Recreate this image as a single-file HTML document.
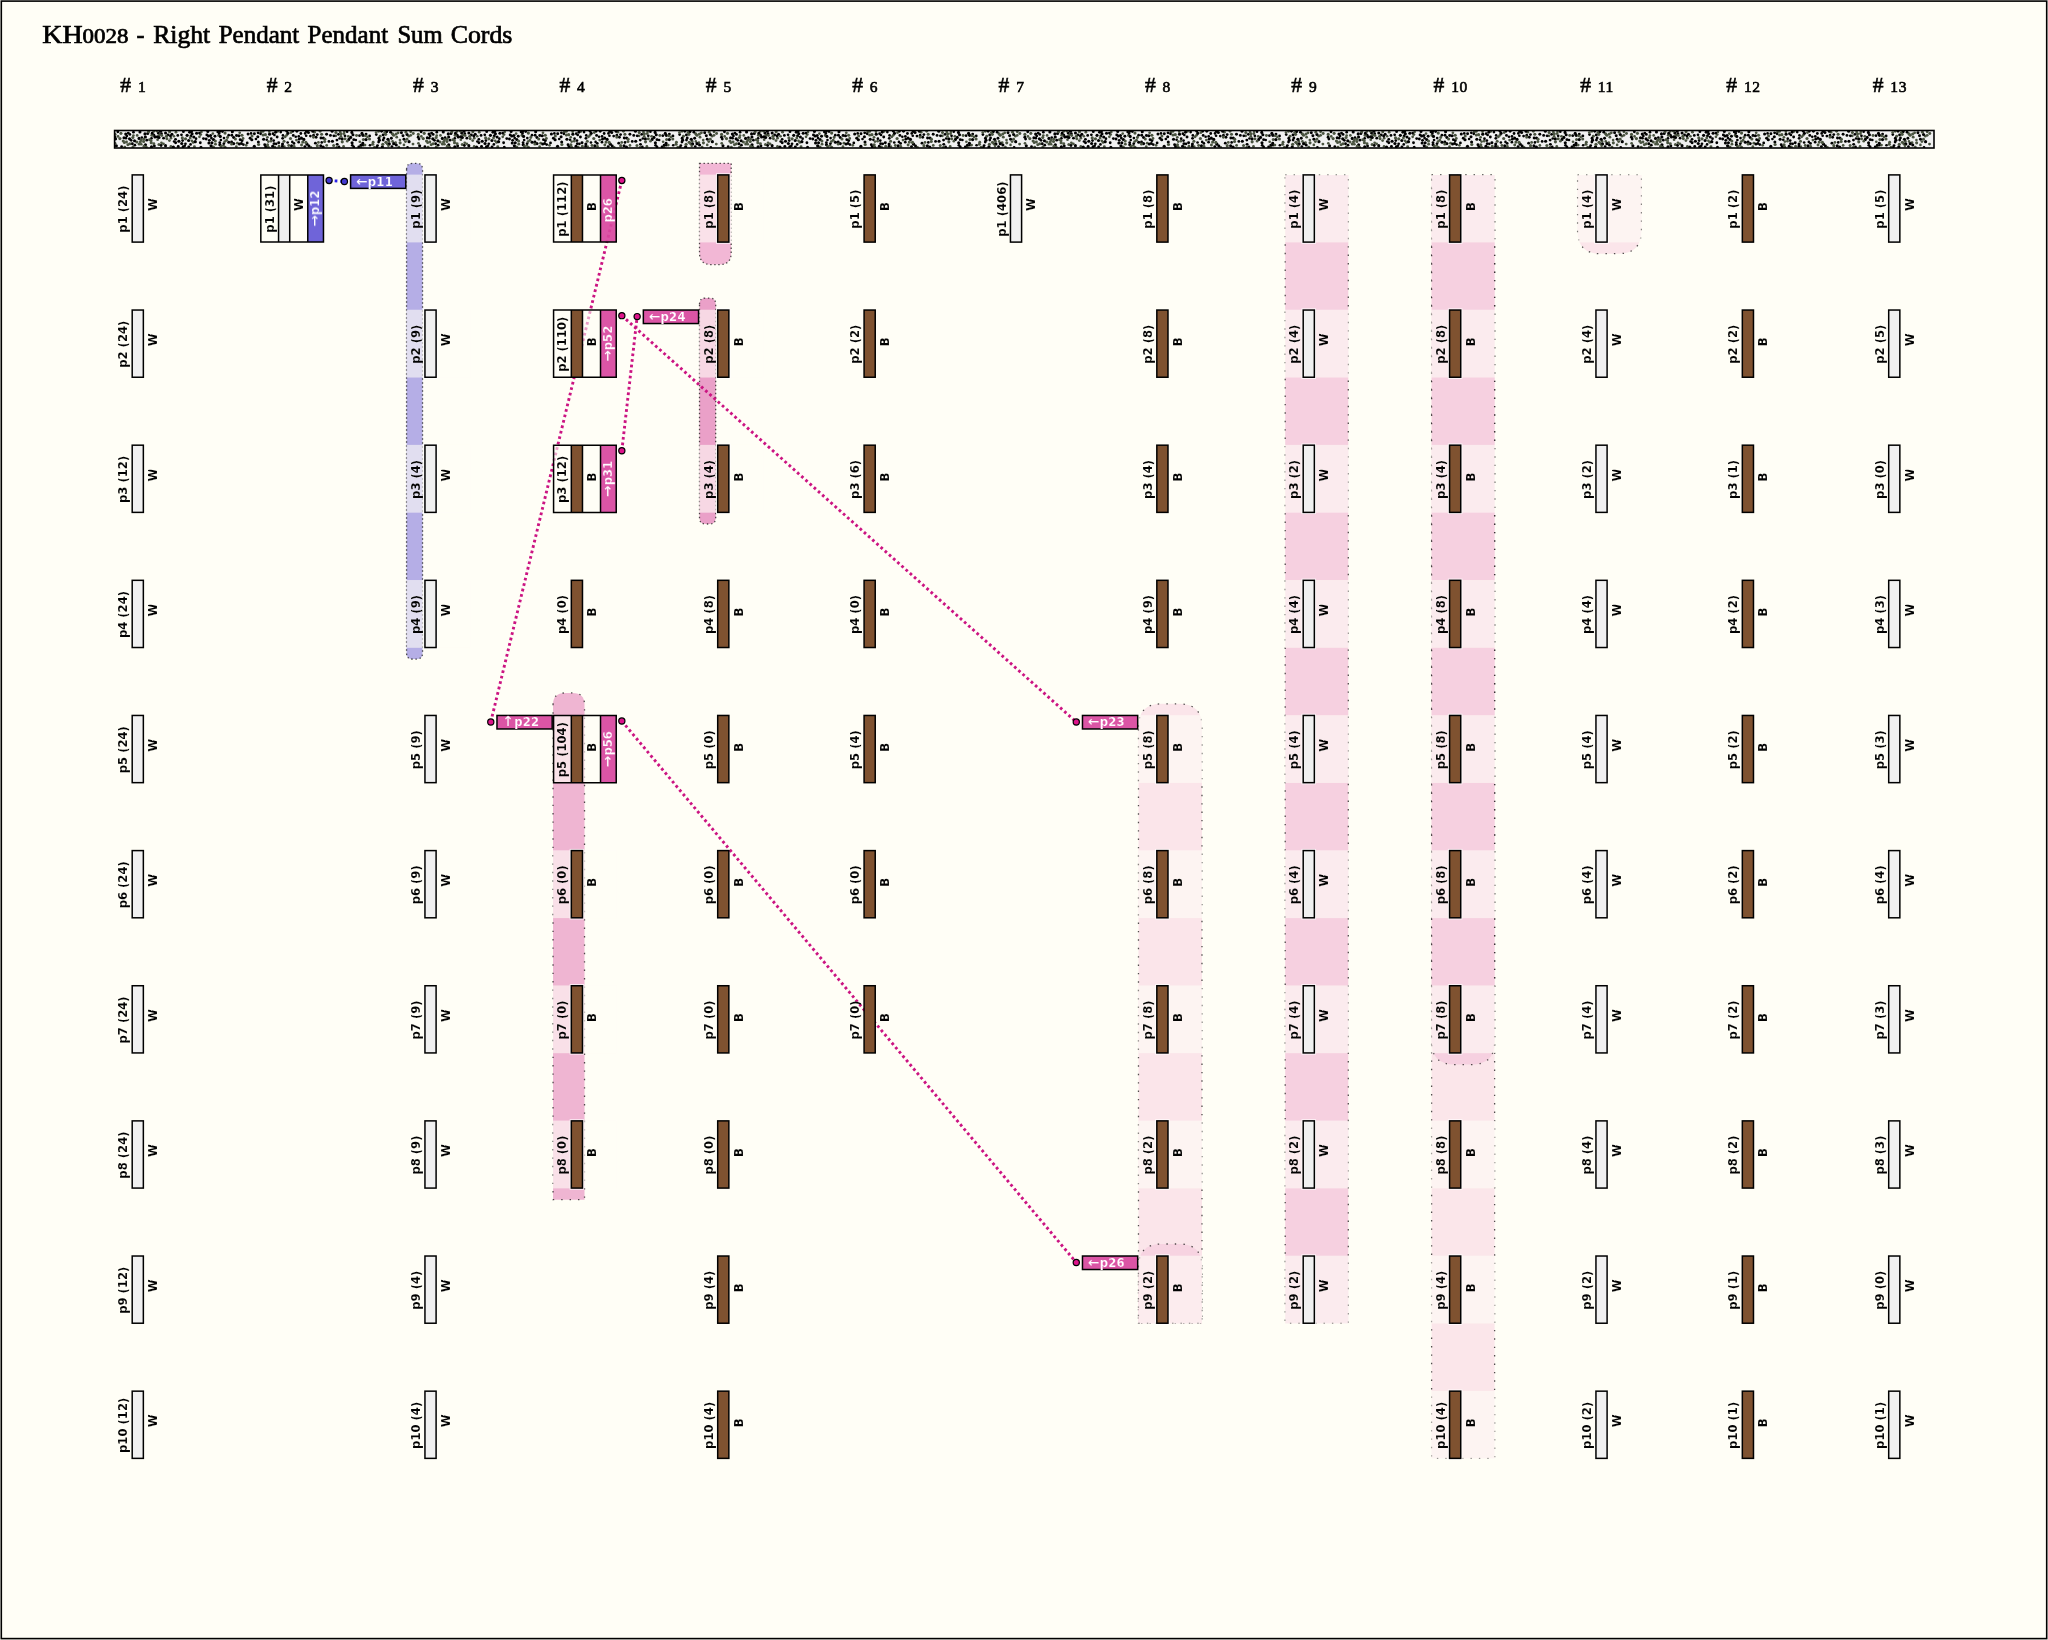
<!DOCTYPE html>
<html lang="en"><head><meta charset="utf-8"><title>KH0028 - Right Pendant Pendant Sum Cords</title>
<style>html,body{margin:0;padding:0;background:#FFFEF6;overflow:hidden;}svg{display:block;will-change:transform;}</style></head>
<body>
<svg width="2048" height="1640" viewBox="0 0 2048 1640">
<defs>
<g id="spk"><circle cx="98.22" cy="3.06" r="1.32" fill="#4A5440"/><circle cx="162.53" cy="6.56" r="1.45" fill="#000"/><circle cx="11.37" cy="7.67" r="1.33" fill="#000"/><circle cx="128.76" cy="14.08" r="1.37" fill="#000"/><circle cx="190.3" cy="16.05" r="1.42" fill="#000"/><circle cx="296.1" cy="1.36" r="1.39" fill="#4A5440"/><circle cx="43.75" cy="2.52" r="1.54" fill="#000"/><circle cx="54.81" cy="10.08" r="1.41" fill="#4A5440"/><circle cx="166.13" cy="1.62" r="1.36" fill="#000"/><circle cx="206.37" cy="7.57" r="1.48" fill="#000"/><circle cx="137.45" cy="5.49" r="1.51" fill="#4A5440"/><circle cx="74.03" cy="9.96" r="1.56" fill="#000"/><circle cx="221.24" cy="5.29" r="1.34" fill="#4A5440"/><circle cx="126.82" cy="12.94" r="1.45" fill="#000"/><circle cx="11.89" cy="11.49" r="1.47" fill="#4A5440"/><circle cx="265.53" cy="5.71" r="1.48" fill="#4A5440"/><circle cx="175.88" cy="8.04" r="1.58" fill="#4A5440"/><circle cx="143.79" cy="11.43" r="1.51" fill="#000"/><circle cx="196.27" cy="16.79" r="1.39" fill="#4A5440"/><circle cx="117.01" cy="11.5" r="1.44" fill="#000"/><circle cx="50.97" cy="2.51" r="1.53" fill="#000"/><circle cx="39.23" cy="4.64" r="1.56" fill="#000"/><circle cx="24.44" cy="7.92" r="1.57" fill="#000"/><circle cx="248.49" cy="14.68" r="1.42" fill="#000"/><circle cx="108.82" cy="15.01" r="1.35" fill="#4A5440"/><circle cx="53.45" cy="4.38" r="1.45" fill="#000"/><circle cx="178.68" cy="4.88" r="1.43" fill="#000"/><circle cx="111.99" cy="9.83" r="1.51" fill="#4A5440"/><circle cx="156.35" cy="10.67" r="1.32" fill="#4A5440"/><circle cx="272.83" cy="13.31" r="1.54" fill="#4A5440"/><circle cx="119.01" cy="7.1" r="1.49" fill="#000"/><circle cx="18.88" cy="1.7" r="1.35" fill="#000"/><circle cx="103.14" cy="1.46" r="1.35" fill="#000"/><circle cx="30.77" cy="6.53" r="1.56" fill="#000"/><circle cx="186.25" cy="3.02" r="1.4" fill="#000"/><circle cx="110.45" cy="2.6" r="1.6" fill="#4A5440"/><circle cx="141.33" cy="8.49" r="1.33" fill="#000"/><circle cx="103.92" cy="4.92" r="1.35" fill="#4A5440"/><circle cx="7" cy="16.1" r="1.34" fill="#000"/><circle cx="160.18" cy="16.55" r="1.51" fill="#4A5440"/><circle cx="79.2" cy="6.58" r="1.53" fill="#000"/><circle cx="161.54" cy="13.3" r="1.37" fill="#000"/><circle cx="246.13" cy="16.65" r="1.54" fill="#4A5440"/><circle cx="248.2" cy="12.66" r="1.46" fill="#000"/><circle cx="107.84" cy="1.07" r="1.38" fill="#000"/><circle cx="78.61" cy="11.89" r="1.43" fill="#4A5440"/><circle cx="284.2" cy="16.71" r="1.41" fill="#4A5440"/><circle cx="66.87" cy="4.3" r="1.36" fill="#000"/><circle cx="254.9" cy="8.42" r="1.54" fill="#4A5440"/><circle cx="25.71" cy="11.37" r="1.53" fill="#4A5440"/><circle cx="227.52" cy="8.39" r="1.54" fill="#000"/><circle cx="100.85" cy="13.65" r="1.42" fill="#4A5440"/><circle cx="121.74" cy="16.03" r="1.35" fill="#4A5440"/><circle cx="44.33" cy="14.07" r="1.5" fill="#4A5440"/><circle cx="106.28" cy="9.54" r="1.3" fill="#000"/><circle cx="294.47" cy="11.19" r="1.58" fill="#000"/><circle cx="131.57" cy="14.81" r="1.36" fill="#4A5440"/><circle cx="76.38" cy="5.38" r="1.48" fill="#000"/><circle cx="39.75" cy="15.43" r="1.44" fill="#000"/><circle cx="176.93" cy="15.34" r="1.58" fill="#000"/><circle cx="152.15" cy="9.27" r="1.31" fill="#000"/><circle cx="133.49" cy="3.58" r="1.54" fill="#000"/><circle cx="52.27" cy="8.32" r="1.47" fill="#4A5440"/><circle cx="98.87" cy="9.05" r="1.54" fill="#000"/><circle cx="32.18" cy="9.73" r="1.38" fill="#000"/><circle cx="234.23" cy="8.88" r="1.53" fill="#000"/><circle cx="276.76" cy="7.82" r="1.45" fill="#000"/><circle cx="137.2" cy="9.29" r="1.58" fill="#000"/><circle cx="212.07" cy="14.89" r="1.38" fill="#4A5440"/><circle cx="169.7" cy="15.98" r="1.34" fill="#4A5440"/><circle cx="36.89" cy="7.81" r="1.37" fill="#000"/><circle cx="22.18" cy="11.51" r="1.57" fill="#4A5440"/><circle cx="46.84" cy="12.27" r="1.34" fill="#4A5440"/><circle cx="267.76" cy="16.37" r="1.59" fill="#000"/><circle cx="120.79" cy="8.54" r="1.55" fill="#4A5440"/><circle cx="48.97" cy="7.63" r="1.4" fill="#000"/><circle cx="59.37" cy="5.79" r="1.31" fill="#4A5440"/><circle cx="168.04" cy="7.78" r="1.4" fill="#000"/><circle cx="189.24" cy="8.95" r="1.6" fill="#000"/><circle cx="239.11" cy="16.44" r="1.38" fill="#000"/><circle cx="82.03" cy="2.71" r="1.57" fill="#000"/><circle cx="248.4" cy="4.82" r="1.58" fill="#000"/><circle cx="173.06" cy="12.02" r="1.32" fill="#000"/><circle cx="208.73" cy="7.53" r="1.58" fill="#000"/><circle cx="192.43" cy="13.67" r="1.56" fill="#000"/><circle cx="20.21" cy="14.66" r="1.4" fill="#000"/><circle cx="167.74" cy="15.7" r="1.34" fill="#000"/><circle cx="159.81" cy="4.49" r="1.35" fill="#000"/><circle cx="15.28" cy="3.89" r="1.39" fill="#000"/><circle cx="230.36" cy="5.33" r="1.35" fill="#000"/><circle cx="105.25" cy="0.9" r="1.3" fill="#000"/><circle cx="222.34" cy="9.58" r="1.44" fill="#000"/><circle cx="283.48" cy="2.33" r="1.43" fill="#4A5440"/><circle cx="150.13" cy="14.2" r="1.45" fill="#000"/><circle cx="208.59" cy="16.61" r="1.55" fill="#000"/><circle cx="214.35" cy="10.97" r="1.4" fill="#000"/><circle cx="77.52" cy="3.26" r="1.55" fill="#000"/><circle cx="264.03" cy="11.53" r="1.37" fill="#000"/><circle cx="88.88" cy="8.09" r="1.43" fill="#000"/><circle cx="79.84" cy="16.28" r="1.46" fill="#4A5440"/><circle cx="74.14" cy="16.34" r="1.41" fill="#000"/><circle cx="0.32" cy="6.82" r="1.45" fill="#000"/><circle cx="60.96" cy="8.83" r="1.38" fill="#000"/><circle cx="27.22" cy="7.11" r="1.31" fill="#000"/><circle cx="92.28" cy="4.39" r="1.46" fill="#000"/><circle cx="227.64" cy="11.32" r="1.56" fill="#4A5440"/><circle cx="298.67" cy="3.04" r="1.49" fill="#4A5440"/><circle cx="13.28" cy="14.22" r="1.49" fill="#4A5440"/><circle cx="222.58" cy="13.84" r="1.46" fill="#000"/><circle cx="152.98" cy="14.21" r="1.55" fill="#4A5440"/><circle cx="207.12" cy="11.9" r="1.31" fill="#000"/><circle cx="40.37" cy="6.48" r="1.55" fill="#000"/><circle cx="169.4" cy="10.83" r="1.5" fill="#4A5440"/><circle cx="148.4" cy="0.65" r="1.52" fill="#4A5440"/><circle cx="199.97" cy="1.68" r="1.38" fill="#4A5440"/><circle cx="22.58" cy="4.93" r="1.36" fill="#4A5440"/><circle cx="224.39" cy="16.5" r="1.41" fill="#000"/><circle cx="232.62" cy="10.66" r="1.32" fill="#4A5440"/><circle cx="44.71" cy="4.74" r="1.39" fill="#4A5440"/><circle cx="172.2" cy="0.8" r="1.38" fill="#000"/><circle cx="203.82" cy="11.88" r="1.39" fill="#4A5440"/><circle cx="156.67" cy="8.17" r="1.34" fill="#000"/><circle cx="271.05" cy="3.85" r="1.58" fill="#4A5440"/><circle cx="5.31" cy="8.08" r="1.59" fill="#4A5440"/><circle cx="63.64" cy="16.01" r="1.47" fill="#000"/><circle cx="42.99" cy="9.14" r="1.34" fill="#4A5440"/><circle cx="248.77" cy="8.89" r="1.51" fill="#4A5440"/><circle cx="70.18" cy="15.23" r="1.31" fill="#000"/><circle cx="1.09" cy="8.61" r="1.39" fill="#000"/><circle cx="42.68" cy="6.21" r="1.55" fill="#000"/><circle cx="0.53" cy="12.84" r="1.34" fill="#4A5440"/><circle cx="280.98" cy="12.22" r="1.39" fill="#4A5440"/><circle cx="112.89" cy="7" r="1.48" fill="#4A5440"/><circle cx="109.4" cy="7.58" r="1.31" fill="#000"/><circle cx="30.85" cy="14.21" r="1.58" fill="#000"/><circle cx="154.98" cy="3.69" r="1.59" fill="#000"/><circle cx="268.2" cy="13.83" r="1.57" fill="#4A5440"/><circle cx="285.31" cy="9.55" r="1.31" fill="#4A5440"/><circle cx="86.81" cy="1.4" r="1.34" fill="#4A5440"/><circle cx="143.21" cy="6.2" r="1.52" fill="#000"/><circle cx="296.11" cy="4.84" r="1.39" fill="#4A5440"/><circle cx="150.76" cy="4.19" r="1.6" fill="#4A5440"/><circle cx="136.47" cy="2.88" r="1.33" fill="#000"/><circle cx="72.53" cy="4.81" r="1.57" fill="#000"/><circle cx="125.53" cy="9.14" r="1.4" fill="#000"/><circle cx="18.82" cy="5.12" r="1.34" fill="#4A5440"/><circle cx="261.71" cy="4.12" r="1.37" fill="#000"/><circle cx="289.33" cy="14.43" r="1.31" fill="#4A5440"/><circle cx="9.78" cy="12.17" r="1.44" fill="#4A5440"/><circle cx="178.09" cy="0.6" r="1.58" fill="#000"/><circle cx="250.4" cy="14.54" r="1.37" fill="#4A5440"/><circle cx="33.07" cy="3.12" r="1.5" fill="#000"/><circle cx="285.55" cy="12.36" r="1.53" fill="#4A5440"/><circle cx="195.78" cy="5.55" r="1.38" fill="#000"/><circle cx="159.06" cy="10.1" r="1.37" fill="#000"/><circle cx="182.3" cy="0.77" r="1.44" fill="#000"/><circle cx="290.85" cy="11.11" r="1.44" fill="#4A5440"/><circle cx="93.23" cy="0.96" r="1.5" fill="#000"/><circle cx="127.39" cy="4.79" r="1.58" fill="#4A5440"/><circle cx="68.78" cy="1.16" r="1.43" fill="#000"/><circle cx="207.02" cy="3.83" r="1.52" fill="#4A5440"/><circle cx="294.16" cy="5.68" r="1.37" fill="#4A5440"/><circle cx="67.16" cy="13" r="1.59" fill="#000"/><circle cx="67.73" cy="7.4" r="1.58" fill="#4A5440"/><circle cx="44.4" cy="7.01" r="1.59" fill="#000"/><circle cx="18.24" cy="7.01" r="1.57" fill="#4A5440"/><circle cx="222.24" cy="16.86" r="1.4" fill="#4A5440"/><circle cx="56.27" cy="15.85" r="1.31" fill="#4A5440"/><circle cx="201.52" cy="6.77" r="1.4" fill="#000"/><circle cx="84.87" cy="6.33" r="1.34" fill="#4A5440"/><circle cx="292.46" cy="3.98" r="1.55" fill="#000"/><circle cx="14.94" cy="8.32" r="1.58" fill="#000"/><circle cx="272.06" cy="1.09" r="1.54" fill="#000"/><circle cx="232.53" cy="1.26" r="1.32" fill="#000"/><circle cx="279.06" cy="4.79" r="1.57" fill="#4A5440"/><circle cx="95.99" cy="5.09" r="1.53" fill="#000"/><circle cx="277.96" cy="10.93" r="1.31" fill="#4A5440"/><circle cx="70.93" cy="8.35" r="1.59" fill="#4A5440"/><circle cx="117.23" cy="4.69" r="1.45" fill="#000"/><circle cx="281.49" cy="3.58" r="1.52" fill="#4A5440"/><circle cx="184.18" cy="5.94" r="1.41" fill="#000"/><circle cx="237.26" cy="1.89" r="1.53" fill="#000"/><circle cx="75.01" cy="1.66" r="1.47" fill="#000"/><circle cx="98.8" cy="16.58" r="1.6" fill="#4A5440"/><circle cx="29.24" cy="8.73" r="1.43" fill="#4A5440"/><circle cx="188.14" cy="11.59" r="1.55" fill="#4A5440"/><circle cx="255.04" cy="5.39" r="1.41" fill="#000"/><circle cx="223.86" cy="3.85" r="1.37" fill="#000"/><circle cx="46.5" cy="15.01" r="1.4" fill="#000"/><circle cx="245.2" cy="11.25" r="1.33" fill="#4A5440"/><circle cx="144" cy="13.95" r="1.57" fill="#4A5440"/><circle cx="12.24" cy="5.39" r="1.36" fill="#000"/><circle cx="282.12" cy="6.67" r="1.43" fill="#4A5440"/><circle cx="286.83" cy="2.32" r="1.49" fill="#000"/><circle cx="77.32" cy="10.37" r="1.36" fill="#4A5440"/><circle cx="3.45" cy="5.93" r="1.36" fill="#4A5440"/><circle cx="241.21" cy="9.53" r="1.33" fill="#000"/><circle cx="193.86" cy="2.09" r="1.51" fill="#000"/><circle cx="124.29" cy="5.22" r="1.59" fill="#000"/><circle cx="94.74" cy="9.83" r="1.42" fill="#000"/><circle cx="262.13" cy="16.84" r="1.36" fill="#000"/><circle cx="1.78" cy="15.3" r="1.55" fill="#000"/><circle cx="139.79" cy="3.25" r="1.47" fill="#000"/><circle cx="194.31" cy="15.43" r="1.49" fill="#000"/><circle cx="158.07" cy="15.69" r="1.45" fill="#000"/><circle cx="244.1" cy="16.36" r="1.34" fill="#000"/><circle cx="146.41" cy="1.47" r="1.42" fill="#4A5440"/><circle cx="274.25" cy="10.71" r="1.35" fill="#4A5440"/><circle cx="238.34" cy="4.22" r="1.55" fill="#000"/><circle cx="251.49" cy="3.58" r="1.42" fill="#000"/><circle cx="37.32" cy="4.63" r="1.57" fill="#4A5440"/><circle cx="229.74" cy="1.22" r="1.34" fill="#4A5440"/><circle cx="181.83" cy="9.57" r="1.39" fill="#4A5440"/><circle cx="127.41" cy="10.1" r="1.5" fill="#000"/><circle cx="135.51" cy="7.75" r="1.49" fill="#000"/><circle cx="148.47" cy="4.43" r="1.53" fill="#4A5440"/><circle cx="143.53" cy="2.35" r="1.43" fill="#000"/><circle cx="154.73" cy="1.26" r="1.32" fill="#4A5440"/><circle cx="152.84" cy="6.76" r="1.34" fill="#4A5440"/><circle cx="259.95" cy="16.84" r="1.54" fill="#4A5440"/><circle cx="58.75" cy="16.6" r="1.59" fill="#000"/><circle cx="277.84" cy="3.29" r="1.58" fill="#4A5440"/><circle cx="229.35" cy="3.19" r="1.38" fill="#4A5440"/><circle cx="247.38" cy="2.94" r="1.58" fill="#000"/><circle cx="63.18" cy="4.88" r="1.4" fill="#000"/><circle cx="11.17" cy="3.57" r="1.58" fill="#000"/><circle cx="206.15" cy="15.2" r="1.54" fill="#000"/><circle cx="34.9" cy="9.25" r="1.41" fill="#4A5440"/><circle cx="264.77" cy="9.65" r="1.56" fill="#000"/><circle cx="31.73" cy="16.79" r="1.42" fill="#4A5440"/><circle cx="241.93" cy="4.92" r="1.47" fill="#4A5440"/><circle cx="109.26" cy="13.06" r="1.35" fill="#000"/><circle cx="225.53" cy="1.39" r="1.38" fill="#4A5440"/><circle cx="177.69" cy="11.42" r="1.3" fill="#000"/><circle cx="186.85" cy="7.65" r="1.57" fill="#000"/><circle cx="198.09" cy="0.96" r="1.41" fill="#000"/><circle cx="68.02" cy="10.11" r="1.36" fill="#000"/><circle cx="29.06" cy="11" r="1.53" fill="#4A5440"/><circle cx="121.91" cy="4.91" r="1.49" fill="#000"/><circle cx="170.56" cy="6.31" r="1.43" fill="#4A5440"/><circle cx="17.71" cy="13.3" r="1.47" fill="#000"/><circle cx="153.76" cy="11.06" r="1.35" fill="#4A5440"/><circle cx="93.84" cy="5.49" r="1.57" fill="#000"/><circle cx="237.48" cy="12.26" r="1.55" fill="#000"/><circle cx="224.97" cy="7.98" r="1.33" fill="#000"/><circle cx="215.85" cy="4.94" r="1.43" fill="#000"/><circle cx="239.14" cy="9.13" r="1.49" fill="#000"/><circle cx="266.92" cy="0.85" r="1.37" fill="#000"/><circle cx="226.31" cy="5.93" r="1.4" fill="#4A5440"/><circle cx="191.29" cy="11.89" r="1.59" fill="#4A5440"/><circle cx="132.61" cy="12.41" r="1.39" fill="#000"/><circle cx="64.29" cy="10.75" r="1.57" fill="#000"/><circle cx="104.6" cy="2.91" r="1.31" fill="#000"/><circle cx="210.07" cy="10.93" r="1.52" fill="#4A5440"/><circle cx="19.95" cy="10.22" r="1.55" fill="#000"/><circle cx="277.34" cy="15.99" r="1.36" fill="#000"/><circle cx="33.96" cy="1.16" r="1.54" fill="#4A5440"/><circle cx="191.55" cy="5.28" r="1.33" fill="#000"/><circle cx="96.79" cy="7.51" r="1.38" fill="#000"/><circle cx="85.71" cy="12.27" r="1.4" fill="#000"/><circle cx="292.38" cy="8.81" r="1.49" fill="#4A5440"/><circle cx="9.4" cy="7.33" r="1.53" fill="#000"/><circle cx="105.18" cy="12.09" r="1.36" fill="#000"/><circle cx="261.52" cy="2.08" r="1.35" fill="#4A5440"/><circle cx="0.39" cy="3.89" r="1.59" fill="#4A5440"/><circle cx="105.3" cy="14.16" r="1.58" fill="#000"/><circle cx="86.06" cy="4.1" r="1.45" fill="#4A5440"/><circle cx="24.53" cy="13.44" r="1.54" fill="#4A5440"/><circle cx="270.06" cy="2" r="1.31" fill="#4A5440"/><circle cx="273.34" cy="8.77" r="1.57" fill="#000"/><circle cx="105.7" cy="5.92" r="1.55" fill="#000"/><circle cx="200.81" cy="12.69" r="1.43" fill="#000"/><circle cx="268.46" cy="4.48" r="1.39" fill="#000"/><circle cx="46.89" cy="3.14" r="1.4" fill="#000"/><circle cx="158.38" cy="3.22" r="1.36" fill="#000"/><circle cx="298.4" cy="13.56" r="1.43" fill="#4A5440"/><circle cx="59.5" cy="11" r="1.36" fill="#000"/><circle cx="117.78" cy="1.15" r="1.54" fill="#000"/><circle cx="210.32" cy="8.76" r="1.44" fill="#4A5440"/><circle cx="122.75" cy="12.68" r="1.43" fill="#4A5440"/><circle cx="219.05" cy="14.95" r="1.51" fill="#4A5440"/><circle cx="258.55" cy="11.68" r="1.44" fill="#4A5440"/><circle cx="128.47" cy="8.02" r="1.42" fill="#4A5440"/><circle cx="236.02" cy="6.94" r="1.59" fill="#000"/><circle cx="48.78" cy="13.34" r="1.46" fill="#4A5440"/><circle cx="164.1" cy="12.29" r="1.49" fill="#000"/><circle cx="251.43" cy="9.1" r="1.58" fill="#000"/><circle cx="119.04" cy="13.03" r="1.6" fill="#000"/><circle cx="39.22" cy="13.26" r="1.49" fill="#4A5440"/><circle cx="68.54" cy="16.31" r="1.49" fill="#000"/><circle cx="252.87" cy="6.38" r="1.38" fill="#4A5440"/><circle cx="114.09" cy="4.73" r="1.36" fill="#000"/><circle cx="91.54" cy="8.42" r="1.49" fill="#000"/><circle cx="281.68" cy="14.53" r="1.55" fill="#000"/><circle cx="274.73" cy="13.38" r="1.55" fill="#000"/><circle cx="192.04" cy="0.84" r="1.59" fill="#000"/><circle cx="198.95" cy="4.68" r="1.34" fill="#000"/><circle cx="70.86" cy="13.25" r="1.35" fill="#000"/><circle cx="50.93" cy="15.13" r="1.53" fill="#000"/><circle cx="202.74" cy="15.17" r="1.55" fill="#4A5440"/><circle cx="168.35" cy="4.91" r="1.34" fill="#000"/><circle cx="149.03" cy="8.72" r="1.56" fill="#000"/><circle cx="291.35" cy="1.83" r="1.49" fill="#4A5440"/><circle cx="8.65" cy="10.54" r="1.58" fill="#4A5440"/><circle cx="217.83" cy="10.79" r="1.56" fill="#000"/><circle cx="159.4" cy="13.16" r="1.43" fill="#000"/><circle cx="250.75" cy="5.37" r="1.42" fill="#4A5440"/><circle cx="153.6" cy="16.49" r="1.54" fill="#4A5440"/><circle cx="100.36" cy="5.77" r="1.48" fill="#000"/><circle cx="268.6" cy="9.49" r="1.39" fill="#000"/><circle cx="54.99" cy="1.2" r="1.57" fill="#4A5440"/><circle cx="198.88" cy="6.61" r="1.54" fill="#4A5440"/><circle cx="16.57" cy="9.85" r="1.34" fill="#000"/><circle cx="179.54" cy="15.88" r="1.44" fill="#4A5440"/><circle cx="125.09" cy="2.26" r="1.36" fill="#4A5440"/><circle cx="46.03" cy="0.85" r="1.51" fill="#000"/><circle cx="36.9" cy="16.35" r="1.56" fill="#000"/><circle cx="39.12" cy="0.89" r="1.37" fill="#4A5440"/><circle cx="15.21" cy="13.22" r="1.56" fill="#4A5440"/><circle cx="221.32" cy="1.97" r="1.51" fill="#4A5440"/><circle cx="139.69" cy="15.8" r="1.59" fill="#000"/><circle cx="217.53" cy="0.79" r="1.5" fill="#000"/><circle cx="94.35" cy="12.49" r="1.56" fill="#000"/><circle cx="110.18" cy="11.11" r="1.43" fill="#4A5440"/><circle cx="116.99" cy="13.42" r="1.54" fill="#4A5440"/><circle cx="18.39" cy="16.48" r="1.55" fill="#4A5440"/><circle cx="100.71" cy="10.47" r="1.55" fill="#4A5440"/><circle cx="114.25" cy="11.76" r="1.57" fill="#000"/><circle cx="244.91" cy="5.22" r="1.38" fill="#000"/><circle cx="246.2" cy="14.74" r="1.38" fill="#000"/><circle cx="258.16" cy="13.75" r="1.57" fill="#4A5440"/><circle cx="167.93" cy="13.6" r="1.53" fill="#000"/><circle cx="184.07" cy="11.65" r="1.36" fill="#000"/><circle cx="26.6" cy="13.75" r="1.37" fill="#4A5440"/><circle cx="57.37" cy="3.73" r="1.51" fill="#000"/><circle cx="181.13" cy="6.22" r="1.31" fill="#000"/><circle cx="10.18" cy="16.74" r="1.45" fill="#4A5440"/><circle cx="172.03" cy="4.86" r="1.43" fill="#4A5440"/><circle cx="77.04" cy="1.22" r="1.35" fill="#000"/><circle cx="25.37" cy="1.43" r="1.56" fill="#000"/><circle cx="275.98" cy="1.65" r="1.42" fill="#000"/><circle cx="292.92" cy="16.76" r="1.31" fill="#000"/><circle cx="273.81" cy="15.34" r="1.31" fill="#4A5440"/><circle cx="228.98" cy="15.91" r="1.39" fill="#4A5440"/><circle cx="179.39" cy="12.95" r="1.4" fill="#000"/><circle cx="145.98" cy="3.35" r="1.34" fill="#000"/><circle cx="205.53" cy="0.81" r="1.36" fill="#4A5440"/><circle cx="262.89" cy="15.09" r="1.43" fill="#000"/><circle cx="29.42" cy="15.74" r="1.49" fill="#4A5440"/><circle cx="190.53" cy="2.93" r="1.32" fill="#000"/><circle cx="47.22" cy="5.02" r="1.4" fill="#4A5440"/><circle cx="96.47" cy="15.32" r="1.59" fill="#000"/><circle cx="202.69" cy="4.04" r="1.39" fill="#000"/><circle cx="110.49" cy="16.75" r="1.58" fill="#4A5440"/><circle cx="42.51" cy="0.63" r="1.46" fill="#4A5440"/><circle cx="56.36" cy="7.69" r="1.37" fill="#4A5440"/><circle cx="173.29" cy="2.85" r="1.53" fill="#000"/><circle cx="184.57" cy="8.68" r="1.36" fill="#000"/><circle cx="61.35" cy="1.67" r="1.42" fill="#4A5440"/><circle cx="255.35" cy="14.69" r="1.3" fill="#000"/><circle cx="36.63" cy="12.25" r="1.56" fill="#4A5440"/><circle cx="97.35" cy="12.19" r="1.53" fill="#000"/><circle cx="289.36" cy="8.67" r="1.46" fill="#000"/><circle cx="162.97" cy="0.94" r="1.37" fill="#4A5440"/><circle cx="75.96" cy="13.92" r="1.33" fill="#000"/><circle cx="212" cy="3.78" r="1.48" fill="#000"/><circle cx="13.7" cy="2.61" r="1.45" fill="#000"/><circle cx="84.81" cy="2.59" r="1.34" fill="#000"/><circle cx="226.44" cy="3.28" r="1.58" fill="#4A5440"/><circle cx="75.61" cy="7.48" r="1.41" fill="#4A5440"/><circle cx="160.99" cy="1.73" r="1.45" fill="#000"/><circle cx="6.32" cy="2.87" r="1.53" fill="#4A5440"/><circle cx="164.47" cy="15.67" r="1.38" fill="#4A5440"/><circle cx="288.4" cy="5.29" r="1.49" fill="#000"/><circle cx="36.51" cy="10.29" r="1.45" fill="#4A5440"/><circle cx="81.41" cy="8.2" r="1.34" fill="#000"/><circle cx="37.58" cy="2.74" r="1.42" fill="#000"/><circle cx="26.64" cy="9.5" r="1.48" fill="#4A5440"/><circle cx="61.02" cy="12.18" r="1.46" fill="#000"/><circle cx="86.39" cy="16.7" r="1.53" fill="#000"/><circle cx="264.26" cy="7.77" r="1.42" fill="#000"/><circle cx="186.92" cy="14.45" r="1.46" fill="#4A5440"/><circle cx="230.42" cy="8.35" r="1.51" fill="#4A5440"/><circle cx="264.12" cy="0.67" r="1.48" fill="#4A5440"/><circle cx="151.01" cy="16.29" r="1.43" fill="#000"/><circle cx="237.69" cy="14.83" r="1.41" fill="#000"/><circle cx="219.3" cy="5.37" r="1.47" fill="#000"/><circle cx="55.87" cy="5.56" r="1.47" fill="#000"/><circle cx="176.39" cy="2.03" r="1.4" fill="#4A5440"/><circle cx="3.24" cy="1.37" r="1.45" fill="#000"/><circle cx="279.13" cy="13.21" r="1.6" fill="#000"/><circle cx="106.49" cy="16.05" r="1.46" fill="#4A5440"/><circle cx="174.11" cy="14.94" r="1.45" fill="#4A5440"/><circle cx="51.78" cy="5.78" r="1.55" fill="#4A5440"/><circle cx="271.31" cy="11.85" r="1.6" fill="#4A5440"/><circle cx="269.37" cy="7.46" r="1.39" fill="#000"/><circle cx="124.78" cy="13.44" r="1.51" fill="#000"/><circle cx="80.68" cy="11.14" r="1.6" fill="#000"/><circle cx="30.36" cy="3.38" r="1.55" fill="#000"/><circle cx="233.72" cy="5.86" r="1.41" fill="#4A5440"/></g>
<clipPath id="pc"><rect x="114.6" y="130.5" width="1819.4" height="17.5"/></clipPath>
</defs>
<rect width="2048" height="1640" fill="#FFFEF6"/>
<rect x="1.3" y="1.1" width="2045.4" height="1637.5" fill="none" stroke="#000" stroke-width="1.6"/>
<g font-family="'Liberation Serif', serif" fill="#000" opacity="0.999">
<g font-size="25.5" stroke="#000" stroke-width="0.7">
<text x="42.3" y="42.5" textLength="86.1" lengthAdjust="spacingAndGlyphs">KH<tspan font-size="21">0028</tspan></text>
<text x="136.4" y="42.5" textLength="8" lengthAdjust="spacingAndGlyphs">-</text>
<text x="153.2" y="42.5" textLength="57" lengthAdjust="spacingAndGlyphs">Right</text>
<text x="218.7" y="42.5" textLength="80.5" lengthAdjust="spacingAndGlyphs">Pendant</text>
<text x="307.6" y="42.5" textLength="80.5" lengthAdjust="spacingAndGlyphs">Pendant</text>
<text x="397.4" y="42.5" textLength="45.2" lengthAdjust="spacingAndGlyphs">Sum</text>
<text x="450.7" y="42.5" textLength="61.7" lengthAdjust="spacingAndGlyphs">Cords</text>
</g>
<text x="133.35" y="91.8" text-anchor="middle" font-size="21.5" stroke="#000" stroke-width="0.6"># <tspan font-size="15.5" dx="1.5" letter-spacing="0.6">1</tspan></text>
<text x="279.72" y="91.8" text-anchor="middle" font-size="21.5" stroke="#000" stroke-width="0.6"># <tspan font-size="15.5" dx="1.5" letter-spacing="0.6">2</tspan></text>
<text x="426.1" y="91.8" text-anchor="middle" font-size="21.5" stroke="#000" stroke-width="0.6"># <tspan font-size="15.5" dx="1.5" letter-spacing="0.6">3</tspan></text>
<text x="572.48" y="91.8" text-anchor="middle" font-size="21.5" stroke="#000" stroke-width="0.6"># <tspan font-size="15.5" dx="1.5" letter-spacing="0.6">4</tspan></text>
<text x="718.85" y="91.8" text-anchor="middle" font-size="21.5" stroke="#000" stroke-width="0.6"># <tspan font-size="15.5" dx="1.5" letter-spacing="0.6">5</tspan></text>
<text x="865.23" y="91.8" text-anchor="middle" font-size="21.5" stroke="#000" stroke-width="0.6"># <tspan font-size="15.5" dx="1.5" letter-spacing="0.6">6</tspan></text>
<text x="1011.6" y="91.8" text-anchor="middle" font-size="21.5" stroke="#000" stroke-width="0.6"># <tspan font-size="15.5" dx="1.5" letter-spacing="0.6">7</tspan></text>
<text x="1157.98" y="91.8" text-anchor="middle" font-size="21.5" stroke="#000" stroke-width="0.6"># <tspan font-size="15.5" dx="1.5" letter-spacing="0.6">8</tspan></text>
<text x="1304.35" y="91.8" text-anchor="middle" font-size="21.5" stroke="#000" stroke-width="0.6"># <tspan font-size="15.5" dx="1.5" letter-spacing="0.6">9</tspan></text>
<text x="1450.73" y="91.8" text-anchor="middle" font-size="21.5" stroke="#000" stroke-width="0.6"># <tspan font-size="15.5" dx="1.5" letter-spacing="0.6">10</tspan></text>
<text x="1597.1" y="91.8" text-anchor="middle" font-size="21.5" stroke="#000" stroke-width="0.6"># <tspan font-size="15.5" dx="1.5" letter-spacing="0.6">11</tspan></text>
<text x="1743.48" y="91.8" text-anchor="middle" font-size="21.5" stroke="#000" stroke-width="0.6"># <tspan font-size="15.5" dx="1.5" letter-spacing="0.6">12</tspan></text>
<text x="1889.85" y="91.8" text-anchor="middle" font-size="21.5" stroke="#000" stroke-width="0.6"># <tspan font-size="15.5" dx="1.5" letter-spacing="0.6">13</tspan></text>
</g>
<rect x="114.6" y="130.5" width="1819.4" height="17.5" fill="#F1F1F1"/>
<g clip-path="url(#pc)"><use href="#spk" x="114.6" y="130.5"/><use href="#spk" x="417.9" y="130.5"/><use href="#spk" x="721.2" y="130.5"/><use href="#spk" x="1024.5" y="130.5"/><use href="#spk" x="1327.8" y="130.5"/><use href="#spk" x="1631.1" y="130.5"/></g>
<rect x="114.6" y="130.5" width="1819.4" height="17.5" fill="none" stroke="#000" stroke-width="1.6"/>
<g stroke="#000" stroke-opacity="0.68" stroke-width="1.3" stroke-linecap="butt">
<path d="M406.55 169.5Q406.55 163.3 412.75 163.3H416.35Q422.55 163.3 422.55 169.5V652.92Q422.55 659.12 416.35 659.12H412.75Q406.55 659.12 406.55 652.92Z" fill="#B5AEE6" stroke-dasharray="1.4 2.6"/>
<path d="M553.03 704.76Q553.03 692.96 564.83 692.96H572.73Q584.53 692.96 584.53 704.76V1199.68H553.03Z" fill="#EFB5D2" stroke-dasharray="1.4 7"/>
<path d="M699.5 163.3H731.2V252.8Q731.2 264.6 719.4 264.6H711.3Q699.5 264.6 699.5 252.8Z" fill="#F2B7D5" stroke-dasharray="1.4 2.6"/>
<path d="M699.5 304.24Q699.5 298.04 705.7 298.04H709.5Q715.7 298.04 715.7 304.24V517.78Q715.7 523.98 709.5 523.98H705.7Q699.5 523.98 699.5 517.78Z" fill="#EAA0C8" stroke-dasharray="1.4 2.6"/>
<path d="M1138.48 726.86Q1138.48 703.86 1161.48 703.86H1178.98Q1201.98 703.86 1201.98 726.86V1323.22H1138.48Z" fill="#FBE5EA" stroke-dasharray="1.4 7"/>
<path d="M1138.48 1267.02Q1138.48 1244.02 1161.48 1244.02H1178.98Q1201.98 1244.02 1201.98 1267.02V1323.22H1138.48Z" fill="#F7D3E1" stroke-dasharray="1.4 7"/>
<path d="M1285.2 174.9H1348.3V1323.22H1285.2Z" fill="#F6D0E0" stroke-dasharray="1.4 7"/>
<path d="M1431.62 174.9H1494.62V1458.36H1431.62Z" fill="#FBE6EA" stroke-dasharray="1.4 7"/>
<path d="M1431.62 174.9H1494.62V1041.54Q1494.62 1064.54 1471.62 1064.54H1454.62Q1431.62 1064.54 1431.62 1041.54Z" fill="#F6D0E0" stroke-dasharray="1.4 7"/>
<path d="M1577.6 174.9H1641.3V230.7Q1641.3 253.7 1618.3 253.7H1600.6Q1577.6 253.7 1577.6 230.7Z" fill="#FBE5EA" stroke-dasharray="1.4 7"/>
</g>
<g fill="#FFFEF6" fill-opacity="0.6">
<rect x="406.6" y="174.6" width="63.85" height="67.8"/>
<rect x="406.6" y="309.74" width="63.85" height="67.8"/>
<rect x="406.6" y="444.88" width="63.85" height="67.8"/>
<rect x="406.6" y="580.02" width="63.85" height="67.8"/>
<rect x="552.98" y="850.3" width="63.85" height="67.8"/>
<rect x="552.98" y="985.44" width="63.85" height="67.8"/>
<rect x="552.98" y="1120.58" width="63.85" height="67.8"/>
<rect x="699.35" y="174.6" width="63.85" height="67.8"/>
<rect x="699.35" y="309.74" width="63.85" height="67.8"/>
<rect x="699.35" y="444.88" width="63.85" height="67.8"/>
<rect x="1138.48" y="715.16" width="63.85" height="67.8"/>
<rect x="1138.48" y="850.3" width="63.85" height="67.8"/>
<rect x="1138.48" y="985.44" width="63.85" height="67.8"/>
<rect x="1138.48" y="1120.58" width="63.85" height="67.8"/>
<rect x="1138.48" y="1255.72" width="63.85" height="67.8"/>
<rect x="1284.85" y="174.6" width="63.85" height="67.8"/>
<rect x="1284.85" y="309.74" width="63.85" height="67.8"/>
<rect x="1284.85" y="444.88" width="63.85" height="67.8"/>
<rect x="1284.85" y="580.02" width="63.85" height="67.8"/>
<rect x="1284.85" y="715.16" width="63.85" height="67.8"/>
<rect x="1284.85" y="850.3" width="63.85" height="67.8"/>
<rect x="1284.85" y="985.44" width="63.85" height="67.8"/>
<rect x="1284.85" y="1120.58" width="63.85" height="67.8"/>
<rect x="1284.85" y="1255.72" width="63.85" height="67.8"/>
<rect x="1431.23" y="174.6" width="63.85" height="67.8"/>
<rect x="1431.23" y="309.74" width="63.85" height="67.8"/>
<rect x="1431.23" y="444.88" width="63.85" height="67.8"/>
<rect x="1431.23" y="580.02" width="63.85" height="67.8"/>
<rect x="1431.23" y="715.16" width="63.85" height="67.8"/>
<rect x="1431.23" y="850.3" width="63.85" height="67.8"/>
<rect x="1431.23" y="985.44" width="63.85" height="67.8"/>
<rect x="1431.23" y="1120.58" width="63.85" height="67.8"/>
<rect x="1431.23" y="1255.72" width="63.85" height="67.8"/>
<rect x="1431.23" y="1390.86" width="63.85" height="67.8"/>
<rect x="1577.6" y="174.6" width="63.85" height="67.8"/>
</g>
<line x1="329.08" y1="180.5" x2="344.4" y2="181.45" stroke="#2A22E8" stroke-width="2.9" stroke-dasharray="2.7 2.9"/>
<line x1="621.83" y1="180.5" x2="490.78" y2="722.01" stroke="#CB1482" stroke-width="2.9" stroke-dasharray="2.7 2.9"/>
<line x1="621.83" y1="315.64" x2="1076.28" y2="722.01" stroke="#CB1482" stroke-width="2.9" stroke-dasharray="2.7 2.9"/>
<line x1="621.83" y1="450.78" x2="637.15" y2="316.59" stroke="#CB1482" stroke-width="2.9" stroke-dasharray="2.7 2.9"/>
<line x1="621.83" y1="721.06" x2="1076.28" y2="1262.57" stroke="#CB1482" stroke-width="2.9" stroke-dasharray="2.7 2.9"/>
<rect x="132.2" y="174.9" width="11.15" height="67.2" fill="#F0F0F0" stroke="#000" stroke-width="1.5"/>
<rect x="132.2" y="310.04" width="11.15" height="67.2" fill="#F0F0F0" stroke="#000" stroke-width="1.5"/>
<rect x="132.2" y="445.18" width="11.15" height="67.2" fill="#F0F0F0" stroke="#000" stroke-width="1.5"/>
<rect x="132.2" y="580.32" width="11.15" height="67.2" fill="#F0F0F0" stroke="#000" stroke-width="1.5"/>
<rect x="132.2" y="715.46" width="11.15" height="67.2" fill="#F0F0F0" stroke="#000" stroke-width="1.5"/>
<rect x="132.2" y="850.6" width="11.15" height="67.2" fill="#F0F0F0" stroke="#000" stroke-width="1.5"/>
<rect x="132.2" y="985.74" width="11.15" height="67.2" fill="#F0F0F0" stroke="#000" stroke-width="1.5"/>
<rect x="132.2" y="1120.88" width="11.15" height="67.2" fill="#F0F0F0" stroke="#000" stroke-width="1.5"/>
<rect x="132.2" y="1256.02" width="11.15" height="67.2" fill="#F0F0F0" stroke="#000" stroke-width="1.5"/>
<rect x="132.2" y="1391.16" width="11.15" height="67.2" fill="#F0F0F0" stroke="#000" stroke-width="1.5"/>
<rect x="260.82" y="174.9" width="17.75" height="67.2" fill="#FFFEF6" fill-opacity="0.62"/>
<rect x="289.72" y="174.9" width="18.05" height="67.2" fill="#FFFEF6" fill-opacity="0.58"/>
<rect x="307.77" y="174.9" width="15.7" height="67.2" fill="#6357D6" fill-opacity="0.92"/>
<rect x="278.57" y="174.9" width="11.15" height="67.2" fill="#F0F0F0"/>
<path d="M260.82 174.9h62.65v67.2h-62.65zM278.57 174.9v67.2M289.72 174.9v67.2M307.77 174.9v67.2" fill="none" stroke="#000" stroke-width="1.5"/>
<rect x="424.95" y="174.9" width="11.15" height="67.2" fill="none" stroke="#fff" stroke-opacity="0.75" stroke-width="3.4"/>
<rect x="424.95" y="174.9" width="11.15" height="67.2" fill="#F0F0F0" stroke="#000" stroke-width="1.5"/>
<rect x="424.95" y="310.04" width="11.15" height="67.2" fill="none" stroke="#fff" stroke-opacity="0.75" stroke-width="3.4"/>
<rect x="424.95" y="310.04" width="11.15" height="67.2" fill="#F0F0F0" stroke="#000" stroke-width="1.5"/>
<rect x="424.95" y="445.18" width="11.15" height="67.2" fill="none" stroke="#fff" stroke-opacity="0.75" stroke-width="3.4"/>
<rect x="424.95" y="445.18" width="11.15" height="67.2" fill="#F0F0F0" stroke="#000" stroke-width="1.5"/>
<rect x="424.95" y="580.32" width="11.15" height="67.2" fill="none" stroke="#fff" stroke-opacity="0.75" stroke-width="3.4"/>
<rect x="424.95" y="580.32" width="11.15" height="67.2" fill="#F0F0F0" stroke="#000" stroke-width="1.5"/>
<rect x="424.95" y="715.46" width="11.15" height="67.2" fill="#F0F0F0" stroke="#000" stroke-width="1.5"/>
<rect x="424.95" y="850.6" width="11.15" height="67.2" fill="#F0F0F0" stroke="#000" stroke-width="1.5"/>
<rect x="424.95" y="985.74" width="11.15" height="67.2" fill="#F0F0F0" stroke="#000" stroke-width="1.5"/>
<rect x="424.95" y="1120.88" width="11.15" height="67.2" fill="#F0F0F0" stroke="#000" stroke-width="1.5"/>
<rect x="424.95" y="1256.02" width="11.15" height="67.2" fill="#F0F0F0" stroke="#000" stroke-width="1.5"/>
<rect x="424.95" y="1391.16" width="11.15" height="67.2" fill="#F0F0F0" stroke="#000" stroke-width="1.5"/>
<rect x="553.58" y="174.9" width="17.75" height="67.2" fill="#FFFEF6" fill-opacity="0.62"/>
<rect x="582.48" y="174.9" width="18.05" height="67.2" fill="#FFFEF6" fill-opacity="0.58"/>
<rect x="600.52" y="174.9" width="15.7" height="67.2" fill="#D8469E" fill-opacity="0.92"/>
<rect x="571.33" y="174.9" width="11.15" height="67.2" fill="#7F5230"/>
<path d="M553.58 174.9h62.65v67.2h-62.65zM571.33 174.9v67.2M582.48 174.9v67.2M600.52 174.9v67.2" fill="none" stroke="#000" stroke-width="1.5"/>
<rect x="553.58" y="310.04" width="17.75" height="67.2" fill="#FFFEF6" fill-opacity="0.62"/>
<rect x="582.48" y="310.04" width="18.05" height="67.2" fill="#FFFEF6" fill-opacity="0.58"/>
<rect x="600.52" y="310.04" width="15.7" height="67.2" fill="#D8469E" fill-opacity="0.92"/>
<rect x="571.33" y="310.04" width="11.15" height="67.2" fill="#7F5230"/>
<path d="M553.58 310.04h62.65v67.2h-62.65zM571.33 310.04v67.2M582.48 310.04v67.2M600.52 310.04v67.2" fill="none" stroke="#000" stroke-width="1.5"/>
<rect x="553.58" y="445.18" width="17.75" height="67.2" fill="#FFFEF6" fill-opacity="0.62"/>
<rect x="582.48" y="445.18" width="18.05" height="67.2" fill="#FFFEF6" fill-opacity="0.58"/>
<rect x="600.52" y="445.18" width="15.7" height="67.2" fill="#D8469E" fill-opacity="0.92"/>
<rect x="571.33" y="445.18" width="11.15" height="67.2" fill="#7F5230"/>
<path d="M553.58 445.18h62.65v67.2h-62.65zM571.33 445.18v67.2M582.48 445.18v67.2M600.52 445.18v67.2" fill="none" stroke="#000" stroke-width="1.5"/>
<rect x="571.33" y="580.32" width="11.15" height="67.2" fill="#7F5230" stroke="#000" stroke-width="1.5"/>
<rect x="553.58" y="715.46" width="17.75" height="67.2" fill="#FFFEF6" fill-opacity="0.62"/>
<rect x="582.48" y="715.46" width="18.05" height="67.2" fill="#FFFEF6" fill-opacity="0.58"/>
<rect x="600.52" y="715.46" width="15.7" height="67.2" fill="#D8469E" fill-opacity="0.92"/>
<rect x="571.33" y="715.46" width="11.15" height="67.2" fill="#7F5230"/>
<path d="M553.58 715.46h62.65v67.2h-62.65zM571.33 715.46v67.2M582.48 715.46v67.2M600.52 715.46v67.2" fill="none" stroke="#000" stroke-width="1.5"/>
<rect x="571.33" y="850.6" width="11.15" height="67.2" fill="none" stroke="#fff" stroke-opacity="0.75" stroke-width="3.4"/>
<rect x="571.33" y="850.6" width="11.15" height="67.2" fill="#7F5230" stroke="#000" stroke-width="1.5"/>
<rect x="571.33" y="985.74" width="11.15" height="67.2" fill="none" stroke="#fff" stroke-opacity="0.75" stroke-width="3.4"/>
<rect x="571.33" y="985.74" width="11.15" height="67.2" fill="#7F5230" stroke="#000" stroke-width="1.5"/>
<rect x="571.33" y="1120.88" width="11.15" height="67.2" fill="none" stroke="#fff" stroke-opacity="0.75" stroke-width="3.4"/>
<rect x="571.33" y="1120.88" width="11.15" height="67.2" fill="#7F5230" stroke="#000" stroke-width="1.5"/>
<rect x="717.7" y="174.9" width="11.15" height="67.2" fill="none" stroke="#fff" stroke-opacity="0.75" stroke-width="3.4"/>
<rect x="717.7" y="174.9" width="11.15" height="67.2" fill="#7F5230" stroke="#000" stroke-width="1.5"/>
<rect x="717.7" y="310.04" width="11.15" height="67.2" fill="none" stroke="#fff" stroke-opacity="0.75" stroke-width="3.4"/>
<rect x="717.7" y="310.04" width="11.15" height="67.2" fill="#7F5230" stroke="#000" stroke-width="1.5"/>
<rect x="717.7" y="445.18" width="11.15" height="67.2" fill="none" stroke="#fff" stroke-opacity="0.75" stroke-width="3.4"/>
<rect x="717.7" y="445.18" width="11.15" height="67.2" fill="#7F5230" stroke="#000" stroke-width="1.5"/>
<rect x="717.7" y="580.32" width="11.15" height="67.2" fill="#7F5230" stroke="#000" stroke-width="1.5"/>
<rect x="717.7" y="715.46" width="11.15" height="67.2" fill="#7F5230" stroke="#000" stroke-width="1.5"/>
<rect x="717.7" y="850.6" width="11.15" height="67.2" fill="#7F5230" stroke="#000" stroke-width="1.5"/>
<rect x="717.7" y="985.74" width="11.15" height="67.2" fill="#7F5230" stroke="#000" stroke-width="1.5"/>
<rect x="717.7" y="1120.88" width="11.15" height="67.2" fill="#7F5230" stroke="#000" stroke-width="1.5"/>
<rect x="717.7" y="1256.02" width="11.15" height="67.2" fill="#7F5230" stroke="#000" stroke-width="1.5"/>
<rect x="717.7" y="1391.16" width="11.15" height="67.2" fill="#7F5230" stroke="#000" stroke-width="1.5"/>
<rect x="864.08" y="174.9" width="11.15" height="67.2" fill="#7F5230" stroke="#000" stroke-width="1.5"/>
<rect x="864.08" y="310.04" width="11.15" height="67.2" fill="#7F5230" stroke="#000" stroke-width="1.5"/>
<rect x="864.08" y="445.18" width="11.15" height="67.2" fill="#7F5230" stroke="#000" stroke-width="1.5"/>
<rect x="864.08" y="580.32" width="11.15" height="67.2" fill="#7F5230" stroke="#000" stroke-width="1.5"/>
<rect x="864.08" y="715.46" width="11.15" height="67.2" fill="#7F5230" stroke="#000" stroke-width="1.5"/>
<rect x="864.08" y="850.6" width="11.15" height="67.2" fill="#7F5230" stroke="#000" stroke-width="1.5"/>
<rect x="864.08" y="985.74" width="11.15" height="67.2" fill="#7F5230" stroke="#000" stroke-width="1.5"/>
<rect x="1010.45" y="174.9" width="11.15" height="67.2" fill="#F0F0F0" stroke="#000" stroke-width="1.5"/>
<rect x="1156.83" y="174.9" width="11.15" height="67.2" fill="#7F5230" stroke="#000" stroke-width="1.5"/>
<rect x="1156.83" y="310.04" width="11.15" height="67.2" fill="#7F5230" stroke="#000" stroke-width="1.5"/>
<rect x="1156.83" y="445.18" width="11.15" height="67.2" fill="#7F5230" stroke="#000" stroke-width="1.5"/>
<rect x="1156.83" y="580.32" width="11.15" height="67.2" fill="#7F5230" stroke="#000" stroke-width="1.5"/>
<rect x="1156.83" y="715.46" width="11.15" height="67.2" fill="none" stroke="#fff" stroke-opacity="0.75" stroke-width="3.4"/>
<rect x="1156.83" y="715.46" width="11.15" height="67.2" fill="#7F5230" stroke="#000" stroke-width="1.5"/>
<rect x="1156.83" y="850.6" width="11.15" height="67.2" fill="none" stroke="#fff" stroke-opacity="0.75" stroke-width="3.4"/>
<rect x="1156.83" y="850.6" width="11.15" height="67.2" fill="#7F5230" stroke="#000" stroke-width="1.5"/>
<rect x="1156.83" y="985.74" width="11.15" height="67.2" fill="none" stroke="#fff" stroke-opacity="0.75" stroke-width="3.4"/>
<rect x="1156.83" y="985.74" width="11.15" height="67.2" fill="#7F5230" stroke="#000" stroke-width="1.5"/>
<rect x="1156.83" y="1120.88" width="11.15" height="67.2" fill="none" stroke="#fff" stroke-opacity="0.75" stroke-width="3.4"/>
<rect x="1156.83" y="1120.88" width="11.15" height="67.2" fill="#7F5230" stroke="#000" stroke-width="1.5"/>
<rect x="1156.83" y="1256.02" width="11.15" height="67.2" fill="none" stroke="#fff" stroke-opacity="0.75" stroke-width="3.4"/>
<rect x="1156.83" y="1256.02" width="11.15" height="67.2" fill="#7F5230" stroke="#000" stroke-width="1.5"/>
<rect x="1303.2" y="174.9" width="11.15" height="67.2" fill="none" stroke="#fff" stroke-opacity="0.75" stroke-width="3.4"/>
<rect x="1303.2" y="174.9" width="11.15" height="67.2" fill="#F0F0F0" stroke="#000" stroke-width="1.5"/>
<rect x="1303.2" y="310.04" width="11.15" height="67.2" fill="none" stroke="#fff" stroke-opacity="0.75" stroke-width="3.4"/>
<rect x="1303.2" y="310.04" width="11.15" height="67.2" fill="#F0F0F0" stroke="#000" stroke-width="1.5"/>
<rect x="1303.2" y="445.18" width="11.15" height="67.2" fill="none" stroke="#fff" stroke-opacity="0.75" stroke-width="3.4"/>
<rect x="1303.2" y="445.18" width="11.15" height="67.2" fill="#F0F0F0" stroke="#000" stroke-width="1.5"/>
<rect x="1303.2" y="580.32" width="11.15" height="67.2" fill="none" stroke="#fff" stroke-opacity="0.75" stroke-width="3.4"/>
<rect x="1303.2" y="580.32" width="11.15" height="67.2" fill="#F0F0F0" stroke="#000" stroke-width="1.5"/>
<rect x="1303.2" y="715.46" width="11.15" height="67.2" fill="none" stroke="#fff" stroke-opacity="0.75" stroke-width="3.4"/>
<rect x="1303.2" y="715.46" width="11.15" height="67.2" fill="#F0F0F0" stroke="#000" stroke-width="1.5"/>
<rect x="1303.2" y="850.6" width="11.15" height="67.2" fill="none" stroke="#fff" stroke-opacity="0.75" stroke-width="3.4"/>
<rect x="1303.2" y="850.6" width="11.15" height="67.2" fill="#F0F0F0" stroke="#000" stroke-width="1.5"/>
<rect x="1303.2" y="985.74" width="11.15" height="67.2" fill="none" stroke="#fff" stroke-opacity="0.75" stroke-width="3.4"/>
<rect x="1303.2" y="985.74" width="11.15" height="67.2" fill="#F0F0F0" stroke="#000" stroke-width="1.5"/>
<rect x="1303.2" y="1120.88" width="11.15" height="67.2" fill="none" stroke="#fff" stroke-opacity="0.75" stroke-width="3.4"/>
<rect x="1303.2" y="1120.88" width="11.15" height="67.2" fill="#F0F0F0" stroke="#000" stroke-width="1.5"/>
<rect x="1303.2" y="1256.02" width="11.15" height="67.2" fill="none" stroke="#fff" stroke-opacity="0.75" stroke-width="3.4"/>
<rect x="1303.2" y="1256.02" width="11.15" height="67.2" fill="#F0F0F0" stroke="#000" stroke-width="1.5"/>
<rect x="1449.58" y="174.9" width="11.15" height="67.2" fill="none" stroke="#fff" stroke-opacity="0.75" stroke-width="3.4"/>
<rect x="1449.58" y="174.9" width="11.15" height="67.2" fill="#7F5230" stroke="#000" stroke-width="1.5"/>
<rect x="1449.58" y="310.04" width="11.15" height="67.2" fill="none" stroke="#fff" stroke-opacity="0.75" stroke-width="3.4"/>
<rect x="1449.58" y="310.04" width="11.15" height="67.2" fill="#7F5230" stroke="#000" stroke-width="1.5"/>
<rect x="1449.58" y="445.18" width="11.15" height="67.2" fill="none" stroke="#fff" stroke-opacity="0.75" stroke-width="3.4"/>
<rect x="1449.58" y="445.18" width="11.15" height="67.2" fill="#7F5230" stroke="#000" stroke-width="1.5"/>
<rect x="1449.58" y="580.32" width="11.15" height="67.2" fill="none" stroke="#fff" stroke-opacity="0.75" stroke-width="3.4"/>
<rect x="1449.58" y="580.32" width="11.15" height="67.2" fill="#7F5230" stroke="#000" stroke-width="1.5"/>
<rect x="1449.58" y="715.46" width="11.15" height="67.2" fill="none" stroke="#fff" stroke-opacity="0.75" stroke-width="3.4"/>
<rect x="1449.58" y="715.46" width="11.15" height="67.2" fill="#7F5230" stroke="#000" stroke-width="1.5"/>
<rect x="1449.58" y="850.6" width="11.15" height="67.2" fill="none" stroke="#fff" stroke-opacity="0.75" stroke-width="3.4"/>
<rect x="1449.58" y="850.6" width="11.15" height="67.2" fill="#7F5230" stroke="#000" stroke-width="1.5"/>
<rect x="1449.58" y="985.74" width="11.15" height="67.2" fill="none" stroke="#fff" stroke-opacity="0.75" stroke-width="3.4"/>
<rect x="1449.58" y="985.74" width="11.15" height="67.2" fill="#7F5230" stroke="#000" stroke-width="1.5"/>
<rect x="1449.58" y="1120.88" width="11.15" height="67.2" fill="none" stroke="#fff" stroke-opacity="0.75" stroke-width="3.4"/>
<rect x="1449.58" y="1120.88" width="11.15" height="67.2" fill="#7F5230" stroke="#000" stroke-width="1.5"/>
<rect x="1449.58" y="1256.02" width="11.15" height="67.2" fill="none" stroke="#fff" stroke-opacity="0.75" stroke-width="3.4"/>
<rect x="1449.58" y="1256.02" width="11.15" height="67.2" fill="#7F5230" stroke="#000" stroke-width="1.5"/>
<rect x="1449.58" y="1391.16" width="11.15" height="67.2" fill="none" stroke="#fff" stroke-opacity="0.75" stroke-width="3.4"/>
<rect x="1449.58" y="1391.16" width="11.15" height="67.2" fill="#7F5230" stroke="#000" stroke-width="1.5"/>
<rect x="1595.95" y="174.9" width="11.15" height="67.2" fill="none" stroke="#fff" stroke-opacity="0.75" stroke-width="3.4"/>
<rect x="1595.95" y="174.9" width="11.15" height="67.2" fill="#F0F0F0" stroke="#000" stroke-width="1.5"/>
<rect x="1595.95" y="310.04" width="11.15" height="67.2" fill="#F0F0F0" stroke="#000" stroke-width="1.5"/>
<rect x="1595.95" y="445.18" width="11.15" height="67.2" fill="#F0F0F0" stroke="#000" stroke-width="1.5"/>
<rect x="1595.95" y="580.32" width="11.15" height="67.2" fill="#F0F0F0" stroke="#000" stroke-width="1.5"/>
<rect x="1595.95" y="715.46" width="11.15" height="67.2" fill="#F0F0F0" stroke="#000" stroke-width="1.5"/>
<rect x="1595.95" y="850.6" width="11.15" height="67.2" fill="#F0F0F0" stroke="#000" stroke-width="1.5"/>
<rect x="1595.95" y="985.74" width="11.15" height="67.2" fill="#F0F0F0" stroke="#000" stroke-width="1.5"/>
<rect x="1595.95" y="1120.88" width="11.15" height="67.2" fill="#F0F0F0" stroke="#000" stroke-width="1.5"/>
<rect x="1595.95" y="1256.02" width="11.15" height="67.2" fill="#F0F0F0" stroke="#000" stroke-width="1.5"/>
<rect x="1595.95" y="1391.16" width="11.15" height="67.2" fill="#F0F0F0" stroke="#000" stroke-width="1.5"/>
<rect x="1742.33" y="174.9" width="11.15" height="67.2" fill="#7F5230" stroke="#000" stroke-width="1.5"/>
<rect x="1742.33" y="310.04" width="11.15" height="67.2" fill="#7F5230" stroke="#000" stroke-width="1.5"/>
<rect x="1742.33" y="445.18" width="11.15" height="67.2" fill="#7F5230" stroke="#000" stroke-width="1.5"/>
<rect x="1742.33" y="580.32" width="11.15" height="67.2" fill="#7F5230" stroke="#000" stroke-width="1.5"/>
<rect x="1742.33" y="715.46" width="11.15" height="67.2" fill="#7F5230" stroke="#000" stroke-width="1.5"/>
<rect x="1742.33" y="850.6" width="11.15" height="67.2" fill="#7F5230" stroke="#000" stroke-width="1.5"/>
<rect x="1742.33" y="985.74" width="11.15" height="67.2" fill="#7F5230" stroke="#000" stroke-width="1.5"/>
<rect x="1742.33" y="1120.88" width="11.15" height="67.2" fill="#7F5230" stroke="#000" stroke-width="1.5"/>
<rect x="1742.33" y="1256.02" width="11.15" height="67.2" fill="#7F5230" stroke="#000" stroke-width="1.5"/>
<rect x="1742.33" y="1391.16" width="11.15" height="67.2" fill="#7F5230" stroke="#000" stroke-width="1.5"/>
<rect x="1888.7" y="174.9" width="11.15" height="67.2" fill="#F0F0F0" stroke="#000" stroke-width="1.5"/>
<rect x="1888.7" y="310.04" width="11.15" height="67.2" fill="#F0F0F0" stroke="#000" stroke-width="1.5"/>
<rect x="1888.7" y="445.18" width="11.15" height="67.2" fill="#F0F0F0" stroke="#000" stroke-width="1.5"/>
<rect x="1888.7" y="580.32" width="11.15" height="67.2" fill="#F0F0F0" stroke="#000" stroke-width="1.5"/>
<rect x="1888.7" y="715.46" width="11.15" height="67.2" fill="#F0F0F0" stroke="#000" stroke-width="1.5"/>
<rect x="1888.7" y="850.6" width="11.15" height="67.2" fill="#F0F0F0" stroke="#000" stroke-width="1.5"/>
<rect x="1888.7" y="985.74" width="11.15" height="67.2" fill="#F0F0F0" stroke="#000" stroke-width="1.5"/>
<rect x="1888.7" y="1120.88" width="11.15" height="67.2" fill="#F0F0F0" stroke="#000" stroke-width="1.5"/>
<rect x="1888.7" y="1256.02" width="11.15" height="67.2" fill="#F0F0F0" stroke="#000" stroke-width="1.5"/>
<rect x="1888.7" y="1391.16" width="11.15" height="67.2" fill="#F0F0F0" stroke="#000" stroke-width="1.5"/>
<rect x="350.6" y="174.9" width="55.2" height="13.5" fill="#6F64D9" stroke="#000" stroke-width="1.5"/>
<rect x="643.35" y="310.04" width="55.2" height="13.5" fill="#DB55A5" stroke="#000" stroke-width="1.5"/>
<rect x="496.98" y="715.46" width="55.2" height="13.5" fill="#DB55A5" stroke="#000" stroke-width="1.5"/>
<rect x="1082.48" y="715.46" width="55.2" height="13.5" fill="#DB55A5" stroke="#000" stroke-width="1.5"/>
<rect x="1082.48" y="1256.02" width="55.2" height="13.5" fill="#DB55A5" stroke="#000" stroke-width="1.5"/>
<g font-family="'DejaVu Sans', 'Liberation Sans', sans-serif" font-weight="bold" font-size="11.6" fill="#000" stroke="#FFFEF6" stroke-width="0.08" opacity="0.999">
<text transform="translate(127.25 209.1) rotate(-90)" text-anchor="middle">p1 (24)</text>
<text transform="translate(157.15 211.1) rotate(-90) scale(.93 1)" font-size="12.6">W</text>
<text transform="translate(127.25 344.24) rotate(-90)" text-anchor="middle">p2 (24)</text>
<text transform="translate(157.15 346.24) rotate(-90) scale(.93 1)" font-size="12.6">W</text>
<text transform="translate(127.25 479.38) rotate(-90)" text-anchor="middle">p3 (12)</text>
<text transform="translate(157.15 481.38) rotate(-90) scale(.93 1)" font-size="12.6">W</text>
<text transform="translate(127.25 614.52) rotate(-90)" text-anchor="middle">p4 (24)</text>
<text transform="translate(157.15 616.52) rotate(-90) scale(.93 1)" font-size="12.6">W</text>
<text transform="translate(127.25 749.66) rotate(-90)" text-anchor="middle">p5 (24)</text>
<text transform="translate(157.15 751.66) rotate(-90) scale(.93 1)" font-size="12.6">W</text>
<text transform="translate(127.25 884.8) rotate(-90)" text-anchor="middle">p6 (24)</text>
<text transform="translate(157.15 886.8) rotate(-90) scale(.93 1)" font-size="12.6">W</text>
<text transform="translate(127.25 1019.94) rotate(-90)" text-anchor="middle">p7 (24)</text>
<text transform="translate(157.15 1021.94) rotate(-90) scale(.93 1)" font-size="12.6">W</text>
<text transform="translate(127.25 1155.08) rotate(-90)" text-anchor="middle">p8 (24)</text>
<text transform="translate(157.15 1157.08) rotate(-90) scale(.93 1)" font-size="12.6">W</text>
<text transform="translate(127.25 1290.22) rotate(-90)" text-anchor="middle">p9 (12)</text>
<text transform="translate(157.15 1292.22) rotate(-90) scale(.93 1)" font-size="12.6">W</text>
<text transform="translate(127.25 1425.36) rotate(-90)" text-anchor="middle">p10 (12)</text>
<text transform="translate(157.15 1427.36) rotate(-90) scale(.93 1)" font-size="12.6">W</text>
<text transform="translate(273.72 209.1) rotate(-90)" text-anchor="middle">p1 (31)</text>
<text transform="translate(303.35 211.1) rotate(-90) scale(.93 1)" font-size="12.6">W</text>
<text transform="translate(420 209.1) rotate(-90)" text-anchor="middle">p1 (9)</text>
<text transform="translate(449.9 211.1) rotate(-90) scale(.93 1)" font-size="12.6">W</text>
<text transform="translate(420 344.24) rotate(-90)" text-anchor="middle">p2 (9)</text>
<text transform="translate(449.9 346.24) rotate(-90) scale(.93 1)" font-size="12.6">W</text>
<text transform="translate(420 479.38) rotate(-90)" text-anchor="middle">p3 (4)</text>
<text transform="translate(449.9 481.38) rotate(-90) scale(.93 1)" font-size="12.6">W</text>
<text transform="translate(420 614.52) rotate(-90)" text-anchor="middle">p4 (9)</text>
<text transform="translate(449.9 616.52) rotate(-90) scale(.93 1)" font-size="12.6">W</text>
<text transform="translate(420 749.66) rotate(-90)" text-anchor="middle">p5 (9)</text>
<text transform="translate(449.9 751.66) rotate(-90) scale(.93 1)" font-size="12.6">W</text>
<text transform="translate(420 884.8) rotate(-90)" text-anchor="middle">p6 (9)</text>
<text transform="translate(449.9 886.8) rotate(-90) scale(.93 1)" font-size="12.6">W</text>
<text transform="translate(420 1019.94) rotate(-90)" text-anchor="middle">p7 (9)</text>
<text transform="translate(449.9 1021.94) rotate(-90) scale(.93 1)" font-size="12.6">W</text>
<text transform="translate(420 1155.08) rotate(-90)" text-anchor="middle">p8 (9)</text>
<text transform="translate(449.9 1157.08) rotate(-90) scale(.93 1)" font-size="12.6">W</text>
<text transform="translate(420 1290.22) rotate(-90)" text-anchor="middle">p9 (4)</text>
<text transform="translate(449.9 1292.22) rotate(-90) scale(.93 1)" font-size="12.6">W</text>
<text transform="translate(420 1425.36) rotate(-90)" text-anchor="middle">p10 (4)</text>
<text transform="translate(449.9 1427.36) rotate(-90) scale(.93 1)" font-size="12.6">W</text>
<text transform="translate(566.48 209.1) rotate(-90)" text-anchor="middle">p1 (112)</text>
<text transform="translate(596.1 211.1) rotate(-90) scale(.93 1)" font-size="12.6">B</text>
<text transform="translate(566.48 344.24) rotate(-90)" text-anchor="middle">p2 (110)</text>
<text transform="translate(596.1 346.24) rotate(-90) scale(.93 1)" font-size="12.6">B</text>
<text transform="translate(566.48 479.38) rotate(-90)" text-anchor="middle">p3 (12)</text>
<text transform="translate(596.1 481.38) rotate(-90) scale(.93 1)" font-size="12.6">B</text>
<text transform="translate(566.38 614.52) rotate(-90)" text-anchor="middle">p4 (0)</text>
<text transform="translate(596.28 616.52) rotate(-90) scale(.93 1)" font-size="12.6">B</text>
<text transform="translate(566.48 749.66) rotate(-90)" text-anchor="middle">p5 (104)</text>
<text transform="translate(596.1 751.66) rotate(-90) scale(.93 1)" font-size="12.6">B</text>
<text transform="translate(566.38 884.8) rotate(-90)" text-anchor="middle">p6 (0)</text>
<text transform="translate(596.28 886.8) rotate(-90) scale(.93 1)" font-size="12.6">B</text>
<text transform="translate(566.38 1019.94) rotate(-90)" text-anchor="middle">p7 (0)</text>
<text transform="translate(596.28 1021.94) rotate(-90) scale(.93 1)" font-size="12.6">B</text>
<text transform="translate(566.38 1155.08) rotate(-90)" text-anchor="middle">p8 (0)</text>
<text transform="translate(596.28 1157.08) rotate(-90) scale(.93 1)" font-size="12.6">B</text>
<text transform="translate(712.75 209.1) rotate(-90)" text-anchor="middle">p1 (8)</text>
<text transform="translate(742.65 211.1) rotate(-90) scale(.93 1)" font-size="12.6">B</text>
<text transform="translate(712.75 344.24) rotate(-90)" text-anchor="middle">p2 (8)</text>
<text transform="translate(742.65 346.24) rotate(-90) scale(.93 1)" font-size="12.6">B</text>
<text transform="translate(712.75 479.38) rotate(-90)" text-anchor="middle">p3 (4)</text>
<text transform="translate(742.65 481.38) rotate(-90) scale(.93 1)" font-size="12.6">B</text>
<text transform="translate(712.75 614.52) rotate(-90)" text-anchor="middle">p4 (8)</text>
<text transform="translate(742.65 616.52) rotate(-90) scale(.93 1)" font-size="12.6">B</text>
<text transform="translate(712.75 749.66) rotate(-90)" text-anchor="middle">p5 (0)</text>
<text transform="translate(742.65 751.66) rotate(-90) scale(.93 1)" font-size="12.6">B</text>
<text transform="translate(712.75 884.8) rotate(-90)" text-anchor="middle">p6 (0)</text>
<text transform="translate(742.65 886.8) rotate(-90) scale(.93 1)" font-size="12.6">B</text>
<text transform="translate(712.75 1019.94) rotate(-90)" text-anchor="middle">p7 (0)</text>
<text transform="translate(742.65 1021.94) rotate(-90) scale(.93 1)" font-size="12.6">B</text>
<text transform="translate(712.75 1155.08) rotate(-90)" text-anchor="middle">p8 (0)</text>
<text transform="translate(742.65 1157.08) rotate(-90) scale(.93 1)" font-size="12.6">B</text>
<text transform="translate(712.75 1290.22) rotate(-90)" text-anchor="middle">p9 (4)</text>
<text transform="translate(742.65 1292.22) rotate(-90) scale(.93 1)" font-size="12.6">B</text>
<text transform="translate(712.75 1425.36) rotate(-90)" text-anchor="middle">p10 (4)</text>
<text transform="translate(742.65 1427.36) rotate(-90) scale(.93 1)" font-size="12.6">B</text>
<text transform="translate(859.13 209.1) rotate(-90)" text-anchor="middle">p1 (5)</text>
<text transform="translate(889.03 211.1) rotate(-90) scale(.93 1)" font-size="12.6">B</text>
<text transform="translate(859.13 344.24) rotate(-90)" text-anchor="middle">p2 (2)</text>
<text transform="translate(889.03 346.24) rotate(-90) scale(.93 1)" font-size="12.6">B</text>
<text transform="translate(859.13 479.38) rotate(-90)" text-anchor="middle">p3 (6)</text>
<text transform="translate(889.03 481.38) rotate(-90) scale(.93 1)" font-size="12.6">B</text>
<text transform="translate(859.13 614.52) rotate(-90)" text-anchor="middle">p4 (0)</text>
<text transform="translate(889.03 616.52) rotate(-90) scale(.93 1)" font-size="12.6">B</text>
<text transform="translate(859.13 749.66) rotate(-90)" text-anchor="middle">p5 (4)</text>
<text transform="translate(889.03 751.66) rotate(-90) scale(.93 1)" font-size="12.6">B</text>
<text transform="translate(859.13 884.8) rotate(-90)" text-anchor="middle">p6 (0)</text>
<text transform="translate(889.03 886.8) rotate(-90) scale(.93 1)" font-size="12.6">B</text>
<text transform="translate(859.13 1019.94) rotate(-90)" text-anchor="middle">p7 (0)</text>
<text transform="translate(889.03 1021.94) rotate(-90) scale(.93 1)" font-size="12.6">B</text>
<text transform="translate(1005.5 209.1) rotate(-90)" text-anchor="middle">p1 (406)</text>
<text transform="translate(1035.4 211.1) rotate(-90) scale(.93 1)" font-size="12.6">W</text>
<text transform="translate(1151.88 209.1) rotate(-90)" text-anchor="middle">p1 (8)</text>
<text transform="translate(1181.78 211.1) rotate(-90) scale(.93 1)" font-size="12.6">B</text>
<text transform="translate(1151.88 344.24) rotate(-90)" text-anchor="middle">p2 (8)</text>
<text transform="translate(1181.78 346.24) rotate(-90) scale(.93 1)" font-size="12.6">B</text>
<text transform="translate(1151.88 479.38) rotate(-90)" text-anchor="middle">p3 (4)</text>
<text transform="translate(1181.78 481.38) rotate(-90) scale(.93 1)" font-size="12.6">B</text>
<text transform="translate(1151.88 614.52) rotate(-90)" text-anchor="middle">p4 (9)</text>
<text transform="translate(1181.78 616.52) rotate(-90) scale(.93 1)" font-size="12.6">B</text>
<text transform="translate(1151.88 749.66) rotate(-90)" text-anchor="middle">p5 (8)</text>
<text transform="translate(1181.78 751.66) rotate(-90) scale(.93 1)" font-size="12.6">B</text>
<text transform="translate(1151.88 884.8) rotate(-90)" text-anchor="middle">p6 (8)</text>
<text transform="translate(1181.78 886.8) rotate(-90) scale(.93 1)" font-size="12.6">B</text>
<text transform="translate(1151.88 1019.94) rotate(-90)" text-anchor="middle">p7 (8)</text>
<text transform="translate(1181.78 1021.94) rotate(-90) scale(.93 1)" font-size="12.6">B</text>
<text transform="translate(1151.88 1155.08) rotate(-90)" text-anchor="middle">p8 (2)</text>
<text transform="translate(1181.78 1157.08) rotate(-90) scale(.93 1)" font-size="12.6">B</text>
<text transform="translate(1151.88 1290.22) rotate(-90)" text-anchor="middle">p9 (2)</text>
<text transform="translate(1181.78 1292.22) rotate(-90) scale(.93 1)" font-size="12.6">B</text>
<text transform="translate(1298.25 209.1) rotate(-90)" text-anchor="middle">p1 (4)</text>
<text transform="translate(1328.15 211.1) rotate(-90) scale(.93 1)" font-size="12.6">W</text>
<text transform="translate(1298.25 344.24) rotate(-90)" text-anchor="middle">p2 (4)</text>
<text transform="translate(1328.15 346.24) rotate(-90) scale(.93 1)" font-size="12.6">W</text>
<text transform="translate(1298.25 479.38) rotate(-90)" text-anchor="middle">p3 (2)</text>
<text transform="translate(1328.15 481.38) rotate(-90) scale(.93 1)" font-size="12.6">W</text>
<text transform="translate(1298.25 614.52) rotate(-90)" text-anchor="middle">p4 (4)</text>
<text transform="translate(1328.15 616.52) rotate(-90) scale(.93 1)" font-size="12.6">W</text>
<text transform="translate(1298.25 749.66) rotate(-90)" text-anchor="middle">p5 (4)</text>
<text transform="translate(1328.15 751.66) rotate(-90) scale(.93 1)" font-size="12.6">W</text>
<text transform="translate(1298.25 884.8) rotate(-90)" text-anchor="middle">p6 (4)</text>
<text transform="translate(1328.15 886.8) rotate(-90) scale(.93 1)" font-size="12.6">W</text>
<text transform="translate(1298.25 1019.94) rotate(-90)" text-anchor="middle">p7 (4)</text>
<text transform="translate(1328.15 1021.94) rotate(-90) scale(.93 1)" font-size="12.6">W</text>
<text transform="translate(1298.25 1155.08) rotate(-90)" text-anchor="middle">p8 (2)</text>
<text transform="translate(1328.15 1157.08) rotate(-90) scale(.93 1)" font-size="12.6">W</text>
<text transform="translate(1298.25 1290.22) rotate(-90)" text-anchor="middle">p9 (2)</text>
<text transform="translate(1328.15 1292.22) rotate(-90) scale(.93 1)" font-size="12.6">W</text>
<text transform="translate(1444.62 209.1) rotate(-90)" text-anchor="middle">p1 (8)</text>
<text transform="translate(1474.53 211.1) rotate(-90) scale(.93 1)" font-size="12.6">B</text>
<text transform="translate(1444.62 344.24) rotate(-90)" text-anchor="middle">p2 (8)</text>
<text transform="translate(1474.53 346.24) rotate(-90) scale(.93 1)" font-size="12.6">B</text>
<text transform="translate(1444.62 479.38) rotate(-90)" text-anchor="middle">p3 (4)</text>
<text transform="translate(1474.53 481.38) rotate(-90) scale(.93 1)" font-size="12.6">B</text>
<text transform="translate(1444.62 614.52) rotate(-90)" text-anchor="middle">p4 (8)</text>
<text transform="translate(1474.53 616.52) rotate(-90) scale(.93 1)" font-size="12.6">B</text>
<text transform="translate(1444.62 749.66) rotate(-90)" text-anchor="middle">p5 (8)</text>
<text transform="translate(1474.53 751.66) rotate(-90) scale(.93 1)" font-size="12.6">B</text>
<text transform="translate(1444.62 884.8) rotate(-90)" text-anchor="middle">p6 (8)</text>
<text transform="translate(1474.53 886.8) rotate(-90) scale(.93 1)" font-size="12.6">B</text>
<text transform="translate(1444.62 1019.94) rotate(-90)" text-anchor="middle">p7 (8)</text>
<text transform="translate(1474.53 1021.94) rotate(-90) scale(.93 1)" font-size="12.6">B</text>
<text transform="translate(1444.62 1155.08) rotate(-90)" text-anchor="middle">p8 (8)</text>
<text transform="translate(1474.53 1157.08) rotate(-90) scale(.93 1)" font-size="12.6">B</text>
<text transform="translate(1444.62 1290.22) rotate(-90)" text-anchor="middle">p9 (4)</text>
<text transform="translate(1474.53 1292.22) rotate(-90) scale(.93 1)" font-size="12.6">B</text>
<text transform="translate(1444.62 1425.36) rotate(-90)" text-anchor="middle">p10 (4)</text>
<text transform="translate(1474.53 1427.36) rotate(-90) scale(.93 1)" font-size="12.6">B</text>
<text transform="translate(1591 209.1) rotate(-90)" text-anchor="middle">p1 (4)</text>
<text transform="translate(1620.9 211.1) rotate(-90) scale(.93 1)" font-size="12.6">W</text>
<text transform="translate(1591 344.24) rotate(-90)" text-anchor="middle">p2 (4)</text>
<text transform="translate(1620.9 346.24) rotate(-90) scale(.93 1)" font-size="12.6">W</text>
<text transform="translate(1591 479.38) rotate(-90)" text-anchor="middle">p3 (2)</text>
<text transform="translate(1620.9 481.38) rotate(-90) scale(.93 1)" font-size="12.6">W</text>
<text transform="translate(1591 614.52) rotate(-90)" text-anchor="middle">p4 (4)</text>
<text transform="translate(1620.9 616.52) rotate(-90) scale(.93 1)" font-size="12.6">W</text>
<text transform="translate(1591 749.66) rotate(-90)" text-anchor="middle">p5 (4)</text>
<text transform="translate(1620.9 751.66) rotate(-90) scale(.93 1)" font-size="12.6">W</text>
<text transform="translate(1591 884.8) rotate(-90)" text-anchor="middle">p6 (4)</text>
<text transform="translate(1620.9 886.8) rotate(-90) scale(.93 1)" font-size="12.6">W</text>
<text transform="translate(1591 1019.94) rotate(-90)" text-anchor="middle">p7 (4)</text>
<text transform="translate(1620.9 1021.94) rotate(-90) scale(.93 1)" font-size="12.6">W</text>
<text transform="translate(1591 1155.08) rotate(-90)" text-anchor="middle">p8 (4)</text>
<text transform="translate(1620.9 1157.08) rotate(-90) scale(.93 1)" font-size="12.6">W</text>
<text transform="translate(1591 1290.22) rotate(-90)" text-anchor="middle">p9 (2)</text>
<text transform="translate(1620.9 1292.22) rotate(-90) scale(.93 1)" font-size="12.6">W</text>
<text transform="translate(1591 1425.36) rotate(-90)" text-anchor="middle">p10 (2)</text>
<text transform="translate(1620.9 1427.36) rotate(-90) scale(.93 1)" font-size="12.6">W</text>
<text transform="translate(1737.38 209.1) rotate(-90)" text-anchor="middle">p1 (2)</text>
<text transform="translate(1767.28 211.1) rotate(-90) scale(.93 1)" font-size="12.6">B</text>
<text transform="translate(1737.38 344.24) rotate(-90)" text-anchor="middle">p2 (2)</text>
<text transform="translate(1767.28 346.24) rotate(-90) scale(.93 1)" font-size="12.6">B</text>
<text transform="translate(1737.38 479.38) rotate(-90)" text-anchor="middle">p3 (1)</text>
<text transform="translate(1767.28 481.38) rotate(-90) scale(.93 1)" font-size="12.6">B</text>
<text transform="translate(1737.38 614.52) rotate(-90)" text-anchor="middle">p4 (2)</text>
<text transform="translate(1767.28 616.52) rotate(-90) scale(.93 1)" font-size="12.6">B</text>
<text transform="translate(1737.38 749.66) rotate(-90)" text-anchor="middle">p5 (2)</text>
<text transform="translate(1767.28 751.66) rotate(-90) scale(.93 1)" font-size="12.6">B</text>
<text transform="translate(1737.38 884.8) rotate(-90)" text-anchor="middle">p6 (2)</text>
<text transform="translate(1767.28 886.8) rotate(-90) scale(.93 1)" font-size="12.6">B</text>
<text transform="translate(1737.38 1019.94) rotate(-90)" text-anchor="middle">p7 (2)</text>
<text transform="translate(1767.28 1021.94) rotate(-90) scale(.93 1)" font-size="12.6">B</text>
<text transform="translate(1737.38 1155.08) rotate(-90)" text-anchor="middle">p8 (2)</text>
<text transform="translate(1767.28 1157.08) rotate(-90) scale(.93 1)" font-size="12.6">B</text>
<text transform="translate(1737.38 1290.22) rotate(-90)" text-anchor="middle">p9 (1)</text>
<text transform="translate(1767.28 1292.22) rotate(-90) scale(.93 1)" font-size="12.6">B</text>
<text transform="translate(1737.38 1425.36) rotate(-90)" text-anchor="middle">p10 (1)</text>
<text transform="translate(1767.28 1427.36) rotate(-90) scale(.93 1)" font-size="12.6">B</text>
<text transform="translate(1883.75 209.1) rotate(-90)" text-anchor="middle">p1 (5)</text>
<text transform="translate(1913.65 211.1) rotate(-90) scale(.93 1)" font-size="12.6">W</text>
<text transform="translate(1883.75 344.24) rotate(-90)" text-anchor="middle">p2 (5)</text>
<text transform="translate(1913.65 346.24) rotate(-90) scale(.93 1)" font-size="12.6">W</text>
<text transform="translate(1883.75 479.38) rotate(-90)" text-anchor="middle">p3 (0)</text>
<text transform="translate(1913.65 481.38) rotate(-90) scale(.93 1)" font-size="12.6">W</text>
<text transform="translate(1883.75 614.52) rotate(-90)" text-anchor="middle">p4 (3)</text>
<text transform="translate(1913.65 616.52) rotate(-90) scale(.93 1)" font-size="12.6">W</text>
<text transform="translate(1883.75 749.66) rotate(-90)" text-anchor="middle">p5 (3)</text>
<text transform="translate(1913.65 751.66) rotate(-90) scale(.93 1)" font-size="12.6">W</text>
<text transform="translate(1883.75 884.8) rotate(-90)" text-anchor="middle">p6 (4)</text>
<text transform="translate(1913.65 886.8) rotate(-90) scale(.93 1)" font-size="12.6">W</text>
<text transform="translate(1883.75 1019.94) rotate(-90)" text-anchor="middle">p7 (3)</text>
<text transform="translate(1913.65 1021.94) rotate(-90) scale(.93 1)" font-size="12.6">W</text>
<text transform="translate(1883.75 1155.08) rotate(-90)" text-anchor="middle">p8 (3)</text>
<text transform="translate(1913.65 1157.08) rotate(-90) scale(.93 1)" font-size="12.6">W</text>
<text transform="translate(1883.75 1290.22) rotate(-90)" text-anchor="middle">p9 (0)</text>
<text transform="translate(1913.65 1292.22) rotate(-90) scale(.93 1)" font-size="12.6">W</text>
<text transform="translate(1883.75 1425.36) rotate(-90)" text-anchor="middle">p10 (1)</text>
<text transform="translate(1913.65 1427.36) rotate(-90) scale(.93 1)" font-size="12.6">W</text>
</g>
<g font-family="'DejaVu Sans', 'Liberation Sans', sans-serif" font-weight="bold" font-size="11.6" fill="#fff" stroke-width="0.2" opacity="0.999">
<text transform="translate(319.02 208.6) rotate(-90)" text-anchor="middle" stroke="#6357D6"><tspan font-size="13.8">→</tspan>p12</text>
<text transform="translate(611.77 210.4) rotate(-90)" text-anchor="middle" stroke="#D8469E">p26</text>
<text transform="translate(611.77 343.74) rotate(-90)" text-anchor="middle" stroke="#D8469E"><tspan font-size="13.8">→</tspan>p52</text>
<text transform="translate(611.77 478.88) rotate(-90)" text-anchor="middle" stroke="#D8469E"><tspan font-size="13.8">→</tspan>p31</text>
<text transform="translate(611.77 749.16) rotate(-90)" text-anchor="middle" stroke="#D8469E"><tspan font-size="13.8">→</tspan>p56</text>
<text x="355.9" y="185.7" stroke="#6F64D9" letter-spacing="0.3"><tspan font-size="13.8">←</tspan>p11</text>
<text x="648.65" y="320.84" stroke="#DB55A5" letter-spacing="0.3"><tspan font-size="13.8">←</tspan>p24</text>
<text x="502.28" y="726.26" stroke="#DB55A5" letter-spacing="0.3"><tspan font-size="13.8">↑</tspan>p22</text>
<text x="1087.78" y="726.26" stroke="#DB55A5" letter-spacing="0.3"><tspan font-size="13.8">←</tspan>p23</text>
<text x="1087.78" y="1266.82" stroke="#DB55A5" letter-spacing="0.3"><tspan font-size="13.8">←</tspan>p26</text>
</g>
<circle cx="329.08" cy="180.5" r="3.1" fill="#4339D0" stroke="#000" stroke-width="1.2"/>
<circle cx="344.4" cy="181.45" r="3.1" fill="#4339D0" stroke="#000" stroke-width="1.2"/>
<circle cx="621.83" cy="180.5" r="3.1" fill="#DD148A" stroke="#000" stroke-width="1.2"/>
<circle cx="490.78" cy="722.01" r="3.1" fill="#DD148A" stroke="#000" stroke-width="1.2"/>
<circle cx="621.83" cy="315.64" r="3.1" fill="#DD148A" stroke="#000" stroke-width="1.2"/>
<circle cx="1076.28" cy="722.01" r="3.1" fill="#DD148A" stroke="#000" stroke-width="1.2"/>
<circle cx="621.83" cy="450.78" r="3.1" fill="#DD148A" stroke="#000" stroke-width="1.2"/>
<circle cx="637.15" cy="316.59" r="3.1" fill="#DD148A" stroke="#000" stroke-width="1.2"/>
<circle cx="621.83" cy="721.06" r="3.1" fill="#DD148A" stroke="#000" stroke-width="1.2"/>
<circle cx="1076.28" cy="1262.57" r="3.1" fill="#DD148A" stroke="#000" stroke-width="1.2"/>
</svg>
</body></html>
